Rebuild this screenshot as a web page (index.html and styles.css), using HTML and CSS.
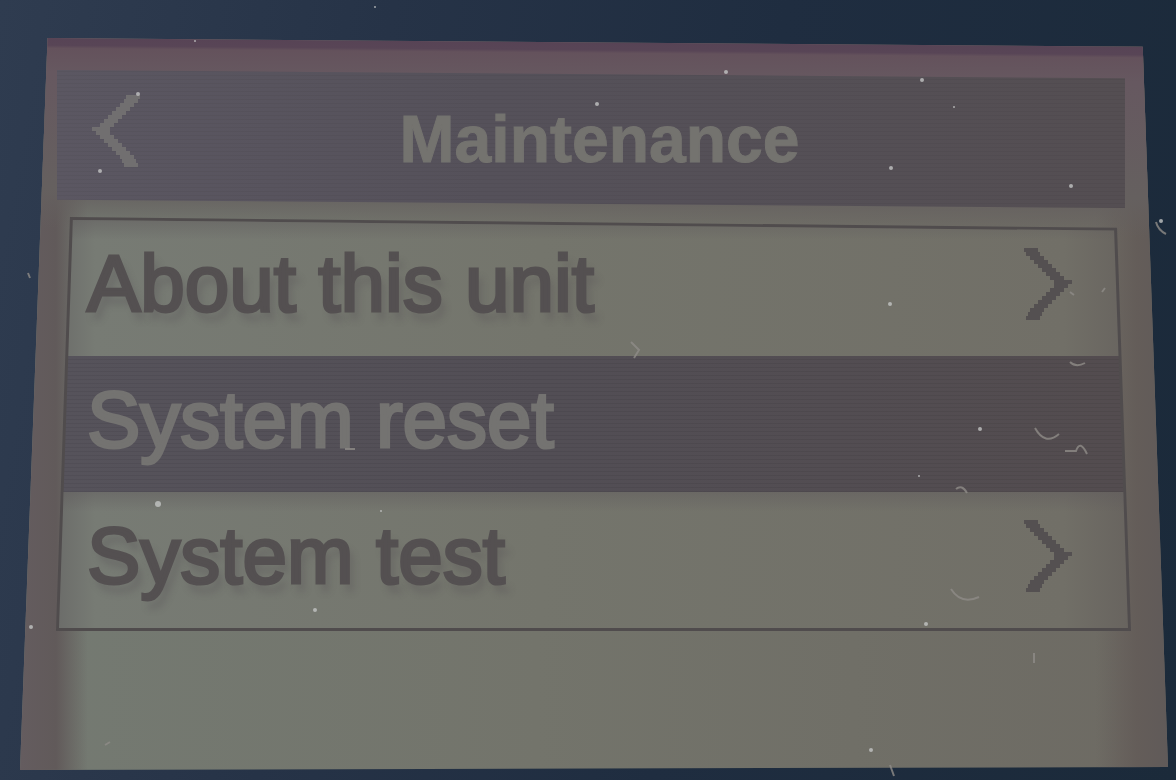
FILE: index.html
```
<!DOCTYPE html>
<html lang="en">
<head>
  <meta charset="UTF-8">
  <meta name="viewport" content="width=device-width, initial-scale=1.0">
  <title>Maintenance</title>
  <link rel="stylesheet" href="styles.css">
</head>
<body>
  <!-- Pixel chevron shared by the back button and the menu rows -->
  <svg class="defs" width="0" height="0" aria-hidden="true">
    <symbol id="chevron" viewBox="0 0 24 36">
      <path d="M0 1h7M1 3h7M3 5h7M5 7h7M7 9h7M9 11h7M11 13h7M13 15h7M15 17h9M15 19h7M13 21h7M11 23h7M9 25h7M7 27h7M5 29h7M3 31h7M2 33h7M1 35h7" fill="none" stroke="currentColor" stroke-width="2"/>
    </symbol>
  </svg>

  <main class="screen">
    <header class="title-bar">
      <button class="back" type="button" aria-label="Back">
        <svg class="chevron"><use href="#chevron"/></svg>
      </button>
      <h1>Maintenance</h1>
    </header>

    <nav class="menu">
      <ul class="menu-list">
        <li>
          <a class="row" href="#about">About this unit
            <svg class="chevron"><use href="#chevron"/></svg>
          </a>
        </li>
        <li>
          <a class="row selected" href="#reset">System reset</a>
        </li>
        <li>
          <a class="row" href="#test">System test
            <svg class="chevron"><use href="#chevron"/></svg>
          </a>
        </li>
      </ul>
    </nav>
  </main>

  <!-- Dust on the glass -->
  <svg class="dust" viewBox="0 0 1176 780" preserveAspectRatio="none" aria-hidden="true">
    <g fill="#c3c5c4">
      <circle cx="138" cy="94" r="2"/><circle cx="597" cy="104" r="2"/>
      <circle cx="100" cy="171" r="2"/><circle cx="1161" cy="221" r="2"/>
      <circle cx="158" cy="504" r="3"/><circle cx="31" cy="627" r="2"/>
      <circle cx="315" cy="610" r="2"/><circle cx="381" cy="511" r="1"/>
      <circle cx="726" cy="72" r="2"/><circle cx="922" cy="80" r="2"/>
      <circle cx="954" cy="107" r="1"/><circle cx="1071" cy="186" r="2"/>
      <circle cx="891" cy="168" r="2"/><circle cx="890" cy="304" r="2"/>
      <circle cx="980" cy="429" r="2"/><circle cx="919" cy="476" r="1"/>
      <circle cx="926" cy="624" r="2"/><circle cx="871" cy="750" r="2"/>
      <circle cx="375" cy="7" r="1"/><circle cx="195" cy="41" r="1"/>
    </g>
    <g fill="none" stroke="#8f8c88" stroke-width="2">
      <path d="M631 342l8 8-5 8M345 449h10M1035 428q10 18 24 6M1065 451h11q4-12 11 3"/>
      <path d="M951 589q10 16 28 8M956 489q6-5 11 4M1070 362q6 6 15 1M105 745l5-3M890 765l4 11"/>
      <path d="M1105 288l-3 4M1070 292l4 3M1156 222q2 8 10 12M1034 653v10M28 273l2 5"/>
    </g>
  </svg>
</body>
</html>
```

FILE: styles.css
```
/* General Styling */
* {
  box-sizing: border-box;
}

body {
  margin: 0;
  min-height: 100vh;
  display: flex;
  position: relative;
  font-family: "Liberation Sans", Arial, sans-serif;
  background: linear-gradient(100deg, #2f3c50 0%, #263347 30%, #1f2d40 60%, #1b2a3a 100%);
}

.defs {
  position: absolute;
}

/* Glass panel, slightly wider at the bottom */
.screen {
  flex: 1;
  margin: 38px 8px 10px 20px;
  padding-top: 32px;
  background:
    linear-gradient(180.5deg, #6a5b68 0, #6a5b68 5px, #574355 7px, #584556 17px, #64525c 20px, #665860 44px, #65605f 160px, rgba(101, 96, 95, 0) 200px),
    linear-gradient(90deg, #645c5f 0, #615a5a 36px, transparent 68px),
    linear-gradient(270deg, #605a59 0, #645d59 32px, transparent 72px),
    linear-gradient(90deg, #747a72 0%, #73746b 45%, #6d6a63 100%);
  clip-path: polygon(2.4% 0, 97.8% 1.2%, 100% 99.6%, 0 100%);
}

/* Title Bar */
.title-bar {
  display: flex;
  align-items: center;
  margin: 0 43px 0 37px;
  padding: 24px 66px 24px 35px;
  background:
    repeating-linear-gradient(0deg, rgba(0, 0, 0, 0.04) 0, rgba(0, 0, 0, 0.04) 1px, transparent 1px, transparent 4px),
    linear-gradient(90deg, #5b5762, #55515a 40%, #544e52);
  clip-path: polygon(0 0, 100% 6%, 100% 100%, 0 94%);
}

.title-bar h1 {
  flex: 1;
  margin: 0;
  font-size: 66px;
  line-height: 90px;
  font-weight: bold;
  text-align: center;
  color: #74736f;
  -webkit-text-stroke: 1px currentColor;
}

.chevron {
  width: 48px;
  height: 72px;
  flex: none;
}

.back {
  display: flex;
  margin-bottom: 16px;
  padding: 0;
  border: none;
  background: none;
  color: #716f70;
  cursor: pointer;
}

.back .chevron {
  transform: scaleX(-1);
}

/* Menu */
.menu {
  margin: 9px 37px 0 36px;
  padding: 3px;
  background-color: #504c4d;
  clip-path: polygon(1.3% 0, 98.7% 2.6%, 100% 100%, 0 100%);
}

.menu-list {
  margin: 0;
  padding: 0;
  list-style: none;
  clip-path: polygon(1.3% 0, 98.7% 2.6%, 100% 100%, 0 100%);
}

.row {
  display: flex;
  align-items: center;
  justify-content: space-between;
  padding: 18px 56px 26px 28px;
  font-size: 80px;
  line-height: 92px;
  text-decoration: none;
  color: #545051;
  -webkit-text-stroke: 3px currentColor;
  text-shadow: 5px 9px 7px rgba(80, 74, 78, 0.3);
  background:
    linear-gradient(180deg, rgba(95, 90, 92, 0.45) 0, transparent 20px),
    linear-gradient(90deg, #6c6d6a 0, #777b74 36px, #74756c 45%, #716f67 94%, #68645f 100%);
}

.row.selected {
  color: #747371;
  text-shadow: none;
  background:
    repeating-linear-gradient(0deg, rgba(0, 0, 0, 0.06) 0, rgba(0, 0, 0, 0.06) 1px, transparent 1px, transparent 4px),
    linear-gradient(90deg, #56535b, #524e55 45%, #534c4f);
}

/* Dust */
.dust {
  position: absolute;
  top: 0;
  left: 0;
  width: 100%;
  height: 100%;
  opacity: 0.8;
  pointer-events: none;
}
```
